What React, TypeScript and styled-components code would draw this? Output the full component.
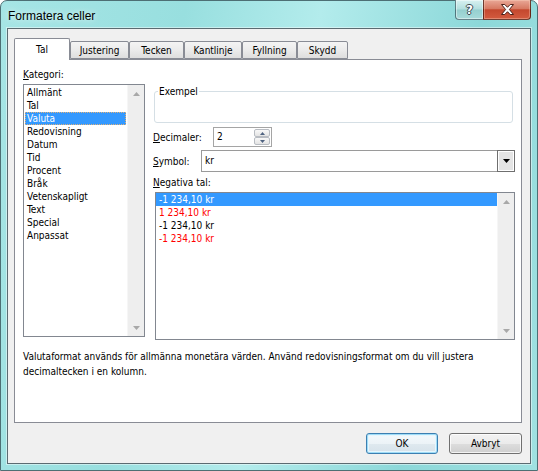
import styled, { createGlobalStyle } from "styled-components";

const GlobalStyle = createGlobalStyle`
  * { box-sizing: border-box; }
  html, body { margin: 0; padding: 0; background: #ffffff; }
  body {
    font-family: "DejaVu Sans Condensed", "DejaVu Sans", "Liberation Sans", sans-serif;
    font-stretch: condensed;
    font-size: 10px;
    color: #000000;
  }
`;

const categories = [
  "Allmänt",
  "Tal",
  "Valuta",
  "Redovisning",
  "Datum",
  "Tid",
  "Procent",
  "Bråk",
  "Vetenskapligt",
  "Text",
  "Special",
  "Anpassat",
];

const negatives = [
  { text: "-1 234,10 kr", red: false },
  { text: "1 234,10 kr", red: true },
  { text: "-1 234,10 kr", red: false },
  { text: "-1 234,10 kr", red: true },
];

const tabs = [
  { label: "Tal", width: 56 },
  { label: "Justering", width: 59 },
  { label: "Tecken", width: 55 },
  { label: "Kantlinje", width: 58 },
  { label: "Fyllning", width: 55 },
  { label: "Skydd", width: 51 },
];

const Frame = styled.div`
  width: 538px;
  height: 471px;
  border: 1px solid #4d6f74;
  border-radius: 7px 7px 0 0;
  background: linear-gradient(
    100deg,
    #a6e5e5 0%,
    #98dfdf 30%,
    #b3ecec 52%,
    #8cd8d9 78%,
    #a0e1e1 100%
  );
  padding: 0 6px 6px;
  display: flex;
  flex-direction: column;
`;

const TitleBar = styled.div`
  height: 27px;
  display: flex;
  justify-content: space-between;
  align-items: flex-start;
`;

const Title = styled.div`
  font-family: "Liberation Sans", Arial, sans-serif;
  font-stretch: normal;
  font-size: 12px;
  line-height: 14px;
  padding: 8px 0 0 1px;
  text-shadow: 0 0 6px rgba(255, 255, 255, 0.9);
`;

const CaptionButtons = styled.div`
  display: flex;
  margin-top: -1px;
`;

const HelpButton = styled.div`
  width: 28px;
  height: 20px;
  border: 1px solid rgba(40, 70, 80, 0.65);
  border-top: none;
  border-right: none;
  border-radius: 0 0 0 4px;
  background: linear-gradient(#d8f1f1 0%, #b3dede 48%, #95cfcf 52%, #a7dada 100%);
  box-shadow: inset 0 0 0 1px rgba(255, 255, 255, 0.45);
  display: flex;
  align-items: center;
  justify-content: center;
  font-family: "DejaVu Sans", sans-serif;
  font-stretch: normal;
  font-weight: bold;
  font-size: 12px;
  color: #ffffff;
  text-shadow: 1px 0 0 #3a4a52, -1px 0 0 #3a4a52, 0 1px 0 #3a4a52, 0 -1px 0 #3a4a52;
`;

const CloseButton = styled.div`
  width: 48px;
  height: 20px;
  border: 1px solid rgba(60, 20, 10, 0.7);
  border-top: none;
  border-radius: 0 0 4px 0;
  background: linear-gradient(#e9a897 0%, #d77a63 45%, #c4482e 52%, #d35b3f 100%);
  box-shadow: inset 0 0 0 1px rgba(255, 220, 200, 0.35);
  display: flex;
  align-items: center;
  justify-content: center;
`;

const Client = styled.div`
  flex: 1;
  background: #f0f0f0;
  border: 1px solid #5b6b71;
  box-shadow: 0 0 0 1px rgba(255, 255, 255, 0.45);
  padding: 9px 8px 9px 6px;
  display: flex;
  flex-direction: column;
`;

const TabStrip = styled.div`
  height: 21px;
  display: flex;
  align-items: flex-end;
  position: relative;
  z-index: 1;
`;

const Tab = styled.div<{ $width: number; $selected?: boolean }>`
  width: ${(p) => p.$width}px;
  height: ${(p) => (p.$selected ? 22 : 18)}px;
  margin-bottom: ${(p) => (p.$selected ? -1 : 0)}px;
  padding-top: ${(p) => (p.$selected ? 0 : 1)}px;
  border: 1px solid #898c95;
  border-bottom: ${(p) => (p.$selected ? "none" : "1px solid #898c95")};
  border-radius: 2px 2px 0 0;
  background: ${(p) =>
    p.$selected ? "#ffffff" : "linear-gradient(#f4f4f4 0%, #ebebeb 50%, #dedede 100%)"};
  display: flex;
  align-items: center;
  justify-content: center;
  white-space: nowrap;
`;

const Panel = styled.div`
  height: 364px;
  border: 1px solid #898c95;
  background: #ffffff;
  padding: 8px 6px 0 8px;
`;

const PanelGrid = styled.div`
  display: grid;
  grid-template-columns: 122px 1fr;
  column-gap: 8px;
  align-items: start;
`;

const Column = styled.div<{ $top?: number }>`
  display: flex;
  flex-direction: column;
  padding-top: ${(p) => p.$top ?? 0}px;
`;

const Label = styled.div<{ $width?: number; $gap?: number }>`
  line-height: 13px;
  height: 13px;
  white-space: nowrap;
  width: ${(p) => (p.$width ? `${p.$width}px` : "auto")};
  flex-shrink: 0;
  margin-bottom: ${(p) => p.$gap ?? 0}px;
`;

const Key = styled.span`
  text-decoration: underline;
`;

const ListBox = styled.div<{ $height: number; $indent?: number; $top?: number }>`
  height: ${(p) => p.$height}px;
  margin-left: ${(p) => p.$indent ?? 0}px;
  margin-top: ${(p) => p.$top ?? 0}px;
  border: 1px solid #828790;
  background: #ffffff;
  display: flex;
`;

const ListItems = styled.div<{ $inset: number }>`
  flex: 1;
  padding: ${(p) => p.$inset}px;
`;

const ListItem = styled.div<{ $selected?: boolean; $red?: boolean; $focus?: boolean; $indent: number }>`
  height: 13px;
  line-height: 13px;
  padding-left: ${(p) => p.$indent}px;
  white-space: nowrap;
  color: ${(p) => (p.$selected ? "#ffffff" : p.$red ? "#ff0000" : "#000000")};
  background: ${(p) => (p.$selected ? "#3399ff" : "transparent")};
  outline: ${(p) => (p.$focus ? "1px dotted #e0b27a" : "none")};
  outline-offset: -1px;
`;

const ScrollTrack = styled.div`
  width: 17px;
  background: #eeeeee;
  border-left: 1px solid #f6f6f6;
  display: flex;
  flex-direction: column;
  justify-content: space-between;
`;

const ScrollArrow = styled.div`
  height: 17px;
  display: flex;
  align-items: center;
  justify-content: center;
`;

const Example = styled.fieldset`
  margin: 0 2px 0 1px;
  padding: 0 3px;
  height: 38px;
  border: 1px solid #d5dfe5;
  border-radius: 3px;
  min-inline-size: auto;
`;

const ExampleLegend = styled.legend`
  padding: 0 1px;
  line-height: 13px;
`;

const FieldRow = styled.div<{ $top: number; $height: number }>`
  display: flex;
  align-items: center;
  height: ${(p) => p.$height}px;
  margin-top: ${(p) => p.$top}px;
`;

const SpinBox = styled.div`
  width: 59px;
  height: 20px;
  border: 1px solid #a5a5a5;
  background: #ffffff;
  display: flex;
`;

const SpinValue = styled.div`
  flex: 1;
  padding-left: 3px;
  line-height: 18px;
`;

const SpinButtons = styled.div`
  width: 17px;
  padding: 1px 1px 1px 0;
  display: flex;
  flex-direction: column;
`;

const SpinButton = styled.div`
  flex: 1;
  border: 1px solid #b8bcc2;
  border-radius: 2px;
  background: linear-gradient(#f8f8f8, #e3e3e3);
  display: flex;
  align-items: center;
  justify-content: center;
`;

const Combo = styled.div`
  flex: 1;
  height: 22px;
  border: 1px solid #9a9a9a;
  background: #ffffff;
  display: flex;
`;

const ComboValue = styled.div`
  flex: 1;
  padding-left: 3px;
  line-height: 20px;
`;

const ComboButton = styled.div`
  width: 18px;
  margin: -1px -1px -1px 0;
  border: 1px solid #6f6f6f;
  background: #e4e4e4;
  box-shadow: inset 0 0 0 1px #ffffff;
  display: flex;
  align-items: center;
  justify-content: center;
`;

const Description = styled.p`
  margin: 9px 0 0;
  line-height: 15px;
`;

const ButtonRow = styled.div`
  margin-top: 10px;
  display: flex;
  justify-content: flex-end;
  gap: 11px;
`;

const DialogButton = styled.div<{ $default?: boolean; $width: number }>`
  width: ${(p) => p.$width}px;
  height: 21px;
  border: 1px solid ${(p) => (p.$default ? "#3c7fb1" : "#707070")};
  border-radius: 3px;
  background: ${(p) =>
    p.$default
      ? "linear-gradient(#f4f9fc 0%, #ecf3f7 50%, #dfe9ef 52%, #d6e2ea 100%)"
      : "linear-gradient(#f2f2f2 0%, #ebebeb 50%, #dddddd 52%, #cfcfcf 100%)"};
  box-shadow: ${(p) =>
    p.$default
      ? "inset 0 0 0 1px #9fdcf7, inset 0 0 0 2px #e6f6fd"
      : "inset 0 0 0 1px rgba(255, 255, 255, 0.75)"};
  display: flex;
  align-items: center;
  justify-content: center;
`;

const Triangle = ({ up, color, w, h }: { up?: boolean; color: string; w: number; h: number }) => (
  <svg width={w} height={h} viewBox={`0 0 ${w} ${h}`}>
    <polygon points={up ? `0,${h} ${w / 2},0 ${w},${h}` : `0,0 ${w},0 ${w / 2},${h}`} fill={color} />
  </svg>
);

const Scrollbar = () => (
  <ScrollTrack>
    <ScrollArrow>
      <Triangle up color="#a8a8a8" w={7} h={4} />
    </ScrollArrow>
    <ScrollArrow>
      <Triangle color="#a8a8a8" w={7} h={4} />
    </ScrollArrow>
  </ScrollTrack>
);

export default function App() {
  return (
    <>
      <GlobalStyle />
      <Frame>
        <TitleBar>
          <Title>Formatera celler</Title>
          <CaptionButtons>
            <HelpButton>?</HelpButton>
            <CloseButton>
              <svg width="13" height="11" viewBox="0 0 13 11">
                <polygon
                  points="0.5,0.5 3.8,0.5 6.5,3.3 9.2,0.5 12.5,0.5 8.4,5.5 12.5,10.5 9.2,10.5 6.5,7.7 3.8,10.5 0.5,10.5 4.6,5.5"
                  fill="#ffffff"
                  stroke="#4a2019"
                  strokeWidth="1"
                />
              </svg>
            </CloseButton>
          </CaptionButtons>
        </TitleBar>

        <Client>
          <TabStrip>
            {tabs.map((t, i) => (
              <Tab key={t.label} $width={t.width} $selected={i === 0}>
                {t.label}
              </Tab>
            ))}
          </TabStrip>

          <Panel>
            <PanelGrid>
              <Column>
                <Label $gap={3}>
                  <Key>K</Key>ategori:
                </Label>
                <ListBox $height={253}>
                  <ListItems $inset={1}>
                    {categories.map((c) => (
                      <ListItem
                        key={c}
                        $indent={2}
                        $selected={c === "Valuta"}
                        $focus={c === "Valuta"}
                      >
                        {c}
                      </ListItem>
                    ))}
                  </ListItems>
                  <Scrollbar />
                </ListBox>
              </Column>

              <Column $top={17}>
                <Example>
                  <ExampleLegend>Exempel</ExampleLegend>
                </Example>

                <FieldRow $top={4} $height={20}>
                  <Label $width={60}>
                    <Key>D</Key>ecimaler:
                  </Label>
                  <SpinBox>
                    <SpinValue>2</SpinValue>
                    <SpinButtons>
                      <SpinButton>
                        <Triangle up color="#4e6280" w={5} h={3} />
                      </SpinButton>
                      <SpinButton>
                        <Triangle color="#4e6280" w={5} h={3} />
                      </SpinButton>
                    </SpinButtons>
                  </SpinBox>
                </FieldRow>

                <FieldRow $top={3} $height={22}>
                  <Label $width={48}>
                    <Key>S</Key>ymbol:
                  </Label>
                  <Combo>
                    <ComboValue>kr</ComboValue>
                    <ComboButton>
                      <Triangle color="#000000" w={7} h={4} />
                    </ComboButton>
                  </Combo>
                </FieldRow>

                <FieldRow $top={4} $height={13}>
                  <Label>
                    <Key>N</Key>egativa tal:
                  </Label>
                </FieldRow>

                <ListBox $height={148} $indent={2} $top={3}>
                  <ListItems $inset={0}>
                    {negatives.map((n, i) => (
                      <ListItem key={i} $indent={3} $red={n.red} $selected={i === 0}>
                        {n.text}
                      </ListItem>
                    ))}
                  </ListItems>
                  <Scrollbar />
                </ListBox>
              </Column>
            </PanelGrid>

            <Description>
              Valutaformat används för allmänna monetära värden. Använd redovisningsformat om du vill justera
              <br />
              decimaltecken i en kolumn.
            </Description>
          </Panel>

          <ButtonRow>
            <DialogButton $default $width={72}>
              OK
            </DialogButton>
            <DialogButton $width={73}>Avbryt</DialogButton>
          </ButtonRow>
        </Client>
      </Frame>
    </>
  );
}
